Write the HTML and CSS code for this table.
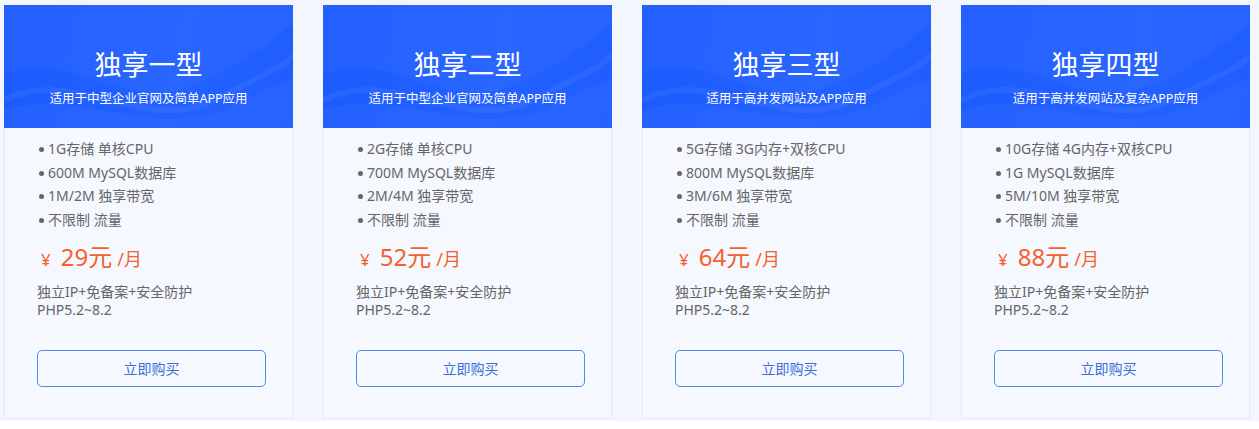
FILE: index.html
```html
<!DOCTYPE html>
<html lang="zh-CN">
<head>
<meta charset="utf-8">
<title>独享型主机</title>
<link rel="stylesheet" href="styles.css">
</head>
<body>
<div class="plans">
  <div class="card">
    <div class="head">
      <svg class="wave" viewBox="0 0 289 123" preserveAspectRatio="none"><path d="M0 70 C60 40 120 110 190 80 S270 30 289 20 L289 0 L0 0 Z" fill="rgba(255,255,255,0.03)"/><path d="M0 95 C70 60 140 130 210 95 S280 60 289 50" stroke="rgba(255,255,255,0.05)" stroke-width="6" fill="none"/><path d="M0 105 C80 80 150 140 230 100 S285 80 289 70 L289 123 L0 123 Z" fill="rgba(255,255,255,0.03)"/></svg>
      <h2 class="title">独享一型</h2>
      <p class="sub">适用于中型企业官网及简单APP应用</p>
    </div>
    <div class="body">
      <ul class="feats">
        <li>1G存储 单核CPU</li>
        <li>600M MySQL数据库</li>
        <li>1M/2M 独享带宽</li>
        <li>不限制 流量</li>
      </ul>
      <div class="price"><span class="yen">¥</span><span class="num">29元</span><span class="per">/月</span></div>
      <p class="extra">独立IP+免备案+安全防护<br>PHP5.2~8.2</p>
      <a class="buy" href="#">立即购买</a>
    </div>
  </div>
  <div class="card">
    <div class="head">
      <svg class="wave" viewBox="0 0 289 123" preserveAspectRatio="none"><path d="M0 70 C60 40 120 110 190 80 S270 30 289 20 L289 0 L0 0 Z" fill="rgba(255,255,255,0.03)"/><path d="M0 95 C70 60 140 130 210 95 S280 60 289 50" stroke="rgba(255,255,255,0.05)" stroke-width="6" fill="none"/><path d="M0 105 C80 80 150 140 230 100 S285 80 289 70 L289 123 L0 123 Z" fill="rgba(255,255,255,0.03)"/></svg>
      <h2 class="title">独享二型</h2>
      <p class="sub">适用于中型企业官网及简单APP应用</p>
    </div>
    <div class="body">
      <ul class="feats">
        <li>2G存储 单核CPU</li>
        <li>700M MySQL数据库</li>
        <li>2M/4M 独享带宽</li>
        <li>不限制 流量</li>
      </ul>
      <div class="price"><span class="yen">¥</span><span class="num">52元</span><span class="per">/月</span></div>
      <p class="extra">独立IP+免备案+安全防护<br>PHP5.2~8.2</p>
      <a class="buy" href="#">立即购买</a>
    </div>
  </div>
  <div class="card">
    <div class="head">
      <svg class="wave" viewBox="0 0 289 123" preserveAspectRatio="none"><path d="M0 70 C60 40 120 110 190 80 S270 30 289 20 L289 0 L0 0 Z" fill="rgba(255,255,255,0.03)"/><path d="M0 95 C70 60 140 130 210 95 S280 60 289 50" stroke="rgba(255,255,255,0.05)" stroke-width="6" fill="none"/><path d="M0 105 C80 80 150 140 230 100 S285 80 289 70 L289 123 L0 123 Z" fill="rgba(255,255,255,0.03)"/></svg>
      <h2 class="title">独享三型</h2>
      <p class="sub">适用于高并发网站及APP应用</p>
    </div>
    <div class="body">
      <ul class="feats">
        <li>5G存储 3G内存+双核CPU</li>
        <li>800M MySQL数据库</li>
        <li>3M/6M 独享带宽</li>
        <li>不限制 流量</li>
      </ul>
      <div class="price"><span class="yen">¥</span><span class="num">64元</span><span class="per">/月</span></div>
      <p class="extra">独立IP+免备案+安全防护<br>PHP5.2~8.2</p>
      <a class="buy" href="#">立即购买</a>
    </div>
  </div>
  <div class="card">
    <div class="head">
      <svg class="wave" viewBox="0 0 289 123" preserveAspectRatio="none"><path d="M0 70 C60 40 120 110 190 80 S270 30 289 20 L289 0 L0 0 Z" fill="rgba(255,255,255,0.03)"/><path d="M0 95 C70 60 140 130 210 95 S280 60 289 50" stroke="rgba(255,255,255,0.05)" stroke-width="6" fill="none"/><path d="M0 105 C80 80 150 140 230 100 S285 80 289 70 L289 123 L0 123 Z" fill="rgba(255,255,255,0.03)"/></svg>
      <h2 class="title">独享四型</h2>
      <p class="sub">适用于高并发网站及复杂APP应用</p>
    </div>
    <div class="body">
      <ul class="feats">
        <li>10G存储 4G内存+双核CPU</li>
        <li>1G MySQL数据库</li>
        <li>5M/10M 独享带宽</li>
        <li>不限制 流量</li>
      </ul>
      <div class="price"><span class="yen">¥</span><span class="num">88元</span><span class="per">/月</span></div>
      <p class="extra">独立IP+免备案+安全防护<br>PHP5.2~8.2</p>
      <a class="buy" href="#">立即购买</a>
    </div>
  </div>
</div>
</body>
</html>
```
FILE: styles.css
```css
html, body {
  margin: 0;
  padding: 0;
  background: #ffffff;
  font-family: "Noto Sans", "Noto Sans CJK SC", sans-serif;
}
.plans {
  display: flex;
  gap: 30px;
  padding: 5px 0 0 4px;
  background: #f3f6fd;
  height: 421px;
  box-sizing: border-box;
}
.card {
  width: 289px;
  height: 414px;
  box-sizing: border-box;
  background: #f5f8fe;
  border: 1px solid #e4eaf4;
  border-top: none;
  display: flex;
  flex-direction: column;
}
.head {
  position: relative;
  flex: none;
  height: 123px;
  margin: 0 -1px;
  background: linear-gradient(100deg, #1c5bff 0%, #2361ff 60%, #1f5dff 100%);
  color: #fff;
  text-align: center;
  overflow: hidden;
}
.wave {
  position: absolute;
  left: 0;
  top: 0;
  width: 100%;
  height: 100%;
}
.title {
  position: relative;
  margin: 0;
  padding-top: 39px;
  font-family: "Noto Sans CJK SC", sans-serif;
  font-size: 27px;
  font-weight: 400;
  line-height: 40px;
}
.sub {
  position: relative;
  margin: 7px 0 0;
  font-size: 12.5px;
  line-height: 16px;
}
.body {
  flex: 1;
  display: flex;
  flex-direction: column;
  padding: 9px 28px 31px 32px;
  color: #666;
  font-size: 14px;
}
.feats {
  list-style: none;
  margin: 0;
  padding: 0;
}
.feats li {
  position: relative;
  padding-left: 11px;
  line-height: 23.5px;
  height: 23.5px;
}
.feats li::before {
  content: "";
  position: absolute;
  left: 2px;
  top: 10px;
  width: 5px;
  height: 5px;
  border-radius: 50%;
  background: #666;
}
.price {
  margin-top: 10px;
  color: #f4612c;
  line-height: 32px;
  height: 32px;
  padding-left: 4px;
  display: flex;
  align-items: baseline;
}
.yen {
  font-size: 17px;
  margin-right: 10px;
}
.num {
  font-size: 24px;
  margin-right: 5px;
}
.per {
  font-size: 18px;
}
.extra {
  margin: 10px 0 0;
  line-height: 17.5px;
  font-size: 14px;
}
.buy {
  display: block;
  margin-top: auto;
  width: 229px;
  height: 37px;
  box-sizing: border-box;
  border: 1px solid #4e8ee0;
  border-radius: 5px;
  text-align: center;
  line-height: 35px;
  font-size: 14px;
  color: #3c6ed8;
  text-decoration: none;
}
```
